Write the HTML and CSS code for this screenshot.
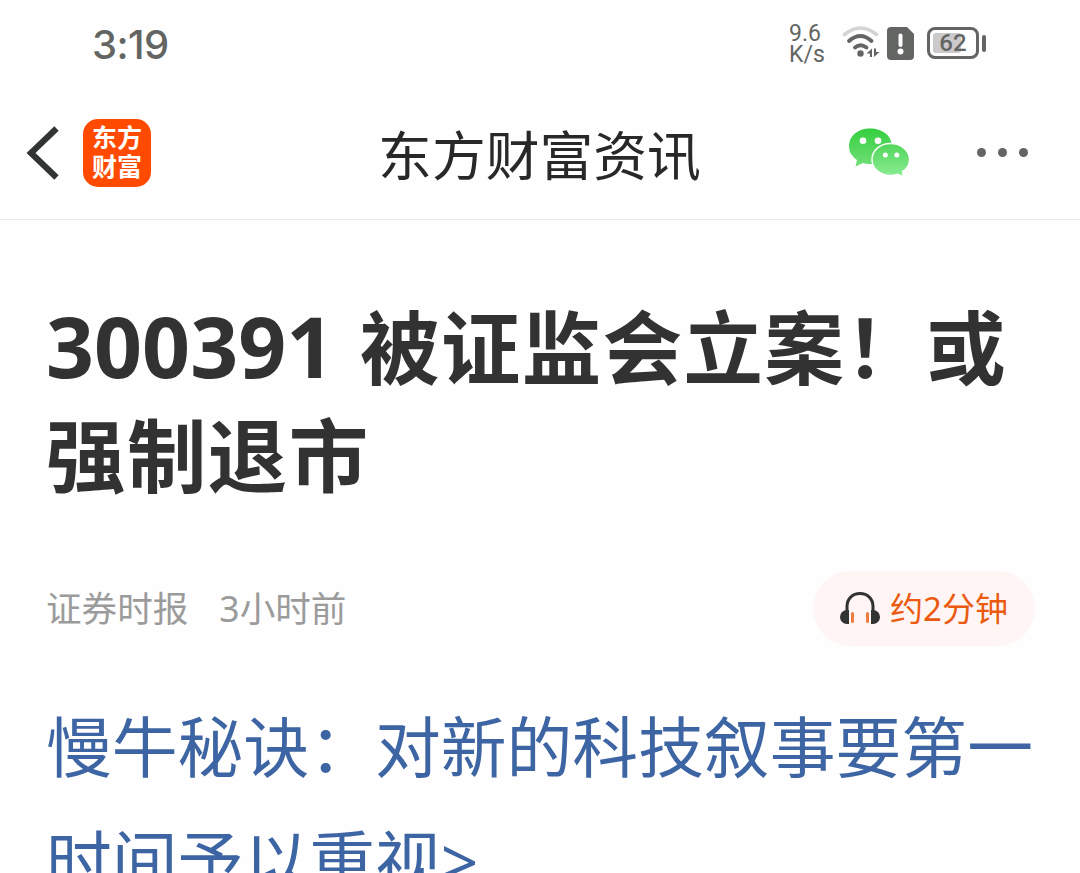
FILE: index.html
```html
<!DOCTYPE html>
<html lang="zh-CN">
<head>
<meta charset="utf-8">
<title>东方财富资讯</title>
<link rel="stylesheet" href="styles.css">
</head>
<body>
<div class="status">
  <span class="clock">3:19</span>
  <div class="indicators">
    <div class="speed"><span>9.6</span><span>K/s</span></div>
    <svg class="wifi" width="38" height="34" viewBox="0 0 38 34" fill="none" stroke-linecap="round">
      <path d="M2.500 8.500Q18.500 -4.500 34.500 8.500" stroke="#d5d3d5" stroke-width="3.600"/>
      <path d="M7 15Q18.500 5 29.500 15" stroke="#636562" stroke-width="3.800"/>
      <path d="M13 21.500Q18.500 17 24.500 21.500" stroke="#636562" stroke-width="3.800"/>
      <circle cx="18.500" cy="27.500" r="3.200" fill="#636562"/>
      <path d="M30 22.500v8.500h-2v-3.500h-3.500zM32 22.500h2v3.500h3.500L32 31z" fill="#636562"/>
    </svg>
    <svg class="sim" width="27" height="33" viewBox="0 0 27 33">
      <path d="M4 0H20L27 7V29Q27 33 23 33H4Q0 33 0 29V4Q0 0 4 0Z" fill="#636562"/>
      <path d="M13.500 8.500v9.500" stroke="#fff" stroke-width="4" stroke-linecap="round"/>
      <circle cx="13.500" cy="24.500" r="3" fill="#fff"/>
    </svg>
    <div class="battery"><span class="charge"></span><span class="percent">62</span></div>
    <span class="terminal"></span>
  </div>
</div>
<header class="bar">
  <div class="left">
    <svg width="34" height="56" viewBox="0 0 34 56" fill="none"><path d="M30.500 3.500L5 28L30.500 52.500" stroke="#323333" stroke-width="6.200" stroke-linejoin="miter"/></svg>
    <div class="logo"><span>东方</span><span>财富</span></div>
  </div>
  <h1 class="name">东方财富资讯</h1>
  <div class="right">
    <svg width="62" height="50" viewBox="0 0 62 50">
      <defs>
        <linearGradient id="g1" x1="0" y1="0" x2="0" y2="1"><stop offset="0" stop-color="#35cf3f"/><stop offset="1" stop-color="#72df78"/></linearGradient>
        <linearGradient id="g2" x1="0" y1="0" x2="0" y2="1"><stop offset="0" stop-color="#50d65a"/><stop offset="1" stop-color="#8cec94"/></linearGradient>
      </defs>
      <path d="M22 0.500C10 0.500 1 8 1 18C1 24 4 28.500 9 32L7.500 38.500L15 35C17 35.700 20 36 22 36C34 36 43.800 28.500 43.800 18S34 0.500 22 0.500Z" fill="url(#g1)"/>
      <path d="M42.500 15.500C32 15.500 24 22.500 24 31.500S32 47.500 42.500 47.500C45 47.500 47 47.200 49.500 46.300L55.500 49L54.500 43.500C59 41 61.500 37 61.500 31.500C61.500 22.500 53 15.500 42.500 15.500Z" fill="url(#g2)" stroke="#fff" stroke-width="1.400"/>
      <g fill="#fff"><circle cx="15" cy="12.700" r="3.300"/><circle cx="30" cy="12.700" r="3.300"/><circle cx="37.300" cy="27" r="2.500"/><circle cx="48.800" cy="27" r="2.500"/></g>
    </svg>
    <div class="more"><i></i><i></i><i></i></div>
  </div>
</header>
<main class="article">
  <h2 class="headline"><span class="code">300391</span><span class="rest">被证监会立案！或</span><br>强制退市</h2>
  <div class="meta">
    <span class="source">证券时报</span><span class="time"><span class="num">3</span>小时前</span>
    <div class="listen">
      <svg width="40" height="33" viewBox="0 0 40 33">
        <path d="M7 21V14.500C7 6.500 12.500 1.600 20 1.600S33 6.500 33 14.500V21" fill="none" stroke="#323333" stroke-width="3"/>
        <path d="M9 18V32H7A7 7 0 0 1 7 18ZM31 18V32H33A7 7 0 0 0 33 18Z" fill="#323333"/>
        <path d="M12.500 21.500V29.500M27.500 21.500V29.500" stroke="#ed7b42" stroke-width="3" stroke-linecap="round"/>
      </svg>
      <span class="duration">约<span class="num">2</span>分钟</span>
    </div>
  </div>
  <p class="promo">慢牛秘诀：对新的科技叙事要第一<br>时间予以重视<span class="arrow">&gt;</span></p>
</main>
</body>
</html>
```

FILE: styles.css
```css
* { box-sizing: border-box; }
html { overflow: hidden; }
body {
  margin: 0;
  width: 1080px;
  height: 873px;
  overflow: hidden;
  background: #fefefe;
  color: #323232;
  font-family: "Noto Sans CJK SC", sans-serif;
}
.status {
  height: 86px;
  padding: 0 94px 0 92px;
  display: flex;
  align-items: center;
  justify-content: space-between;
  color: #636562;
}
.clock {
  font: 500 40px/46px Inter, sans-serif;
  padding-top: 4px;
  letter-spacing: -0.6px;
}
.indicators { display: flex; align-items: center; }
.speed {
  display: flex;
  flex-direction: column;
  font: 400 23px/21px Roboto, sans-serif;
  width: 53px;
  padding-top: 1px;
}
.wifi { margin-right: 7px; }
.sim { margin-right: 13px; }
.battery {
  width: 52px;
  height: 32px;
  border: 3px solid #636562;
  border-radius: 8px;
  padding: 3px;
  position: relative;
}
.charge {
  display: block;
  width: 28px;
  height: 20px;
  border-radius: 3px;
  background: #cbc9cb;
}
.percent {
  position: absolute;
  inset: 0;
  text-align: center;
  font: 500 24px/27px Roboto, sans-serif;
}
.terminal {
  width: 4px;
  height: 17px;
  margin-left: 3px;
  border-radius: 2px;
  background: #636562;
}
.bar {
  height: 134px;
  padding: 0 52px 0 26px;
  border-bottom: 1px solid #e9e9e9;
  display: flex;
  align-items: center;
  justify-content: space-between;
}
.left { display: flex; align-items: center; gap: 23px; width: 205px; }
.logo {
  width: 68px;
  height: 68px;
  border-radius: 15px;
  background: #ff4a00;
  color: #fff;
  display: flex;
  flex-direction: column;
  align-items: center;
  justify-content: center;
  padding-bottom: 4px;
  font-size: 25px;
  font-weight: 700;
  line-height: 29px;
}
.name {
  margin: 0;
  font-size: 53.8px;
  line-height: 70px;
  font-weight: 400;
  color: #282828;
}
.right { display: flex; align-items: center; justify-content: flex-end; gap: 67px; }
.more { display: flex; gap: 12px; }
.more i { width: 9px; height: 9px; border-radius: 50%; background: #636562; }
.article { padding: 70px 45px 0 46px; white-space: nowrap; }
.headline {
  margin: 0;
  font-size: 79.4px;
  letter-spacing: 1.5px;
  line-height: 108px;
  font-weight: 700;
}
.code {
  display: inline-block;
  width: 314px;
  font-family: "Noto Sans", sans-serif;
  font-size: 84px;
  line-height: 100px;
  letter-spacing: 0;
}
.meta {
  margin-top: 65px;
  height: 75px;
  display: flex;
  align-items: center;
  font-size: 35.6px;
  color: #9b9b9b;
}
.source, .time, .duration { padding-bottom: 4px; }
.num { font-family: "Noto Sans", sans-serif; }
.time { margin-left: 31px; }
.listen {
  width: 222px;
  height: 75px;
  margin-left: auto;
  border-radius: 38px;
  background: #fff5f5;
  display: flex;
  align-items: center;
  justify-content: center;
  gap: 10px;
  font-size: 33px;
  color: #ea5b11;
}
.promo {
  margin: 41px 0 0;
  font-size: 65.8px;
  line-height: 114px;
  color: #3e65a3;
}
.arrow { font-family: "Noto Sans", sans-serif; }
```
